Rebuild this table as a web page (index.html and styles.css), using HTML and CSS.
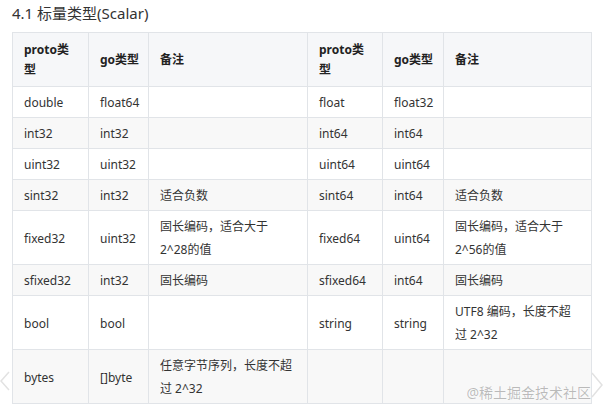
FILE: index.html
```html
<!DOCTYPE html>
<html lang="zh">
<head>
<meta charset="utf-8">
<title>4.1 标量类型(Scalar)</title>
<link rel="stylesheet" href="styles.css">
</head>
<body>
<div class="page">
  <h3 class="title">4.1 标量类型(Scalar)</h3>
  <table class="md-table">
    <colgroup>
      <col class="c1"><col class="c2"><col class="c3"><col class="c4"><col class="c5"><col class="c6">
    </colgroup>
    <thead>
      <tr>
        <th>proto类型</th><th class="nw">go类型</th><th>备注</th>
        <th>proto类型</th><th class="nw">go类型</th><th>备注</th>
      </tr>
    </thead>
    <tbody>
      <tr><td>double</td><td>float64</td><td></td><td>float</td><td>float32</td><td></td></tr>
      <tr><td>int32</td><td>int32</td><td></td><td>int64</td><td>int64</td><td></td></tr>
      <tr><td>uint32</td><td>uint32</td><td></td><td>uint64</td><td>uint64</td><td></td></tr>
      <tr><td>sint32</td><td>int32</td><td>适合负数</td><td>sint64</td><td>int64</td><td>适合负数</td></tr>
      <tr><td>fixed32</td><td>uint32</td><td>固长编码，适合大于2^28的值</td><td>fixed64</td><td>uint64</td><td>固长编码，适合大于2^56的值</td></tr>
      <tr><td>sfixed32</td><td>int32</td><td>固长编码</td><td>sfixed64</td><td>int64</td><td>固长编码</td></tr>
      <tr><td>bool</td><td>bool</td><td></td><td>string</td><td>string</td><td>UTF8 编码，长度不超过 2^32</td></tr>
      <tr><td>bytes</td><td>[]byte</td><td>任意字节序列，长度不超过 2^32</td><td></td><td></td><td></td></tr>
    </tbody>
  </table>
  <div class="watermark">@稀土掘金技术社区</div>
  <svg class="nav nav-left" width="10" height="20" viewBox="0 0 10 20"><path d="M9 1 L1 10 L9 19" fill="none" stroke="#e2e2e2" stroke-width="1.5"/></svg>
  <svg class="nav nav-right" width="12" height="26" viewBox="0 0 12 26"><path d="M1 1 L11 13 L1 25" fill="none" stroke="#e2e2e2" stroke-width="1.5"/></svg>
</div>
</body>
</html>
```
FILE: styles.css
```css
html, body {
  margin: 0;
  padding: 0;
  background: #ffffff;
}
body {
  font-family: "Noto Sans", "Noto Sans CJK SC", sans-serif;
  color: #333333;
  width: 603px;
  height: 411px;
  overflow: hidden;
}
.page {
  position: relative;
  width: 603px;
  height: 411px;
  padding: 3px 0 0 12px;
  box-sizing: border-box;
}
.title {
  margin: 0 0 9px 0;
  font-size: 15px;
  line-height: 20px;
  font-weight: normal;
  color: #333333;
}
.md-table {
  border-collapse: collapse;
  table-layout: fixed;
  width: 579px;
  font-size: 12px;
  line-height: 23px;
}
.c1 { width: 76px; }
.c2 { width: 60px; }
.c3 { width: 159px; }
.c4 { width: 75px; }
.c5 { width: 61px; }
.c6 { width: 148px; }
.md-table th,
.md-table td {
  border: 1px solid #e1e4e8;
  padding: 4px 13px 3px 11px;
  text-align: left;
  vertical-align: middle;
  word-break: normal;
}
.md-table th {
  font-weight: bold;
  line-height: 20px;
  padding: 7px 11px 6px 11px;
  background: #f6f7f9;
  color: #222222;
}
.md-table th.nw {
  white-space: nowrap;
}
.md-table tbody tr:nth-child(even) td {
  background: #f8f8f8;
}
.md-table tbody tr:nth-child(odd) td {
  background: #ffffff;
}
.watermark {
  position: absolute;
  right: 12px;
  top: 384px;
  font-family: "Noto Sans", "Noto Sans CJK SC", sans-serif;
  font-size: 14px;
  line-height: 18px;
  color: rgba(0, 0, 0, 0.25);
}
.nav {
  position: absolute;
}
.nav-left {
  left: 0;
  top: 371px;
}
.nav-right {
  right: 0;
  top: 372px;
}
```
